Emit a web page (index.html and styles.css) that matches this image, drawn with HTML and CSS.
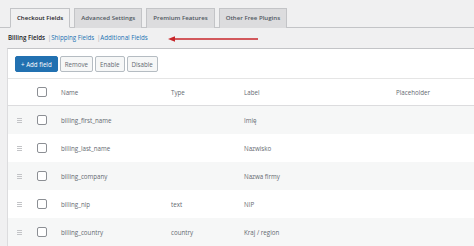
FILE: index.html
```html
<!DOCTYPE html>
<html lang="en">
  <head>
    <meta charset="UTF-8" />
    <meta name="viewport" content="width=device-width" />
    <title>Checkout Fields</title>
    <link rel="stylesheet" href="styles.css">
  </head>
  <body>
    <nav class="tabs">
      <a class="tab active">Checkout Fields</a>
      <a class="tab">Advanced Settings</a>
      <a class="tab">Premium Features</a>
      <a class="tab">Other Free Plugins</a>
    </nav>
    <div class="subnav">
      <b>Billing Fields</b>
      <span class="sep">|</span><a>Shipping Fields</a>
      <span class="sep">|</span><a>Additional Fields</a>
      <svg class="arrow" width="92" height="8" viewBox="0 0 92 8">
        <line x1="5" y1="4" x2="90" y2="4" stroke="#c8262a" stroke-width="1.4" />
        <path d="M0 4 L7 1.2 L7 6.8 Z" fill="#c8262a" />
      </svg>
    </div>
    <div class="panel">
      <div class="actions">
        <button class="btn primary">+ Add field</button>
        <button class="btn">Remove</button>
        <button class="btn">Enable</button>
        <button class="btn">Disable</button>
      </div>
      <table class="fields">
        <colgroup>
          <col class="c-drag" /><col class="c-check" /><col class="c-name" /><col class="c-type" /><col class="c-label" /><col />
        </colgroup>
        <thead>
          <tr>
            <th></th>
            <th><span class="check"></span></th>
            <th>Name</th>
            <th>Type</th>
            <th>Label</th>
            <th>Placeholder</th>
          </tr>
        </thead>
        <tbody>
          <tr>
            <td><span class="drag"></span></td>
            <td><span class="check"></span></td>
            <td>billing_first_name</td>
            <td></td>
            <td>Imię</td>
            <td></td>
          </tr>
          <tr>
            <td><span class="drag"></span></td>
            <td><span class="check"></span></td>
            <td>billing_last_name</td>
            <td></td>
            <td>Nazwisko</td>
            <td></td>
          </tr>
          <tr>
            <td><span class="drag"></span></td>
            <td><span class="check"></span></td>
            <td>billing_company</td>
            <td></td>
            <td>Nazwa firmy</td>
            <td></td>
          </tr>
          <tr>
            <td><span class="drag"></span></td>
            <td><span class="check"></span></td>
            <td>billing_nip</td>
            <td>text</td>
            <td>NIP</td>
            <td></td>
          </tr>
          <tr>
            <td><span class="drag"></span></td>
            <td><span class="check"></span></td>
            <td>billing_country</td>
            <td>country</td>
            <td>Kraj / region</td>
            <td></td>
          </tr>
        </tbody>
      </table>
    </div>
  </body>
</html>
```

FILE: styles.css
```css
body {
  margin: 0;
  background: #f0f0f1;
  font-family: "Open Sans", "Noto Sans", sans-serif;
  font-size: 6.2px;
  color: #50575e;
  overflow: hidden;
}
.tabs {
  display: flex;
  gap: 4px;
  padding: 8px 0 0 10px;
  border-bottom: 1px solid #c3c4c7;
}
.tab {
  background: #dcdcde;
  border: 1px solid #c3c4c7;
  border-bottom: none;
  padding: 0 6px;
  line-height: 18px;
  font-size: 6.1px;
  font-weight: 600;
  color: #50575e;
  margin-bottom: -1px;
}
.tab.active {
  background: #f0f0f1;
  color: #1d2327;
  border-bottom: 1px solid #f0f0f1;
}
.subnav {
  position: relative;
  height: 20px;
  line-height: 20px;
  padding-left: 8px;
  color: #a7aaad;
}
.subnav b {
  color: #1d2327;
  font-weight: 600;
  margin-right: 1px;
}
.subnav a {
  color: #2271b1;
  margin-right: 1px;
}
.arrow {
  position: absolute;
  left: 168px;
  top: 7px;
}
.panel {
  margin-left: 7px;
  background: #fff;
  border-top: 1px solid #c3c4c7;
  border-left: 1px solid #dcdcde;
  height: 200px;
}
.actions {
  display: flex;
  gap: 2px;
  padding: 7px 7px 6px 7px;
}
.btn {
  font: inherit;
  height: 16px;
  padding: 0 4px;
  border: 1px solid #b5bcc2;
  border-radius: 2px;
  background: #f6f7f7;
  color: #646970;
}
.btn.primary {
  padding: 0 5px;
  background: #2271b1;
  border-color: #2271b1;
  color: #fff;
}
.fields {
  width: 100%;
  border-collapse: collapse;
  table-layout: fixed;
  border-top: 1px solid #e5e5e5;
}
.c-drag { width: 24px; }
.c-check { width: 24px; }
.c-name { width: 110px; }
.c-type { width: 73px; }
.c-label { width: 152px; }
.fields th,
.fields td {
  text-align: left;
  font-weight: 400;
  padding: 0 0 0 5px;
  height: 28px;
  white-space: nowrap;
  color: #646970;
}
.fields th {
  height: 26px;
  border-bottom: 1px solid #dcdcde;
}
.fields tbody tr:nth-child(odd) {
  background: #f6f7f7;
}
.fields td:first-child {
  padding-left: 9px;
}
.check {
  display: block;
  width: 8px;
  height: 8px;
  border: 1px solid #8c8f94;
  border-radius: 2px;
  background: #fff;
}
.drag {
  display: block;
  width: 5px;
  height: 3px;
  border-top: 1px solid #c3c4c7;
  border-bottom: 1px solid #c3c4c7;
  position: relative;
}
.drag::after {
  content: "";
  position: absolute;
  left: 0;
  right: 0;
  top: 1px;
  border-top: 1px solid #c3c4c7;
}
```
